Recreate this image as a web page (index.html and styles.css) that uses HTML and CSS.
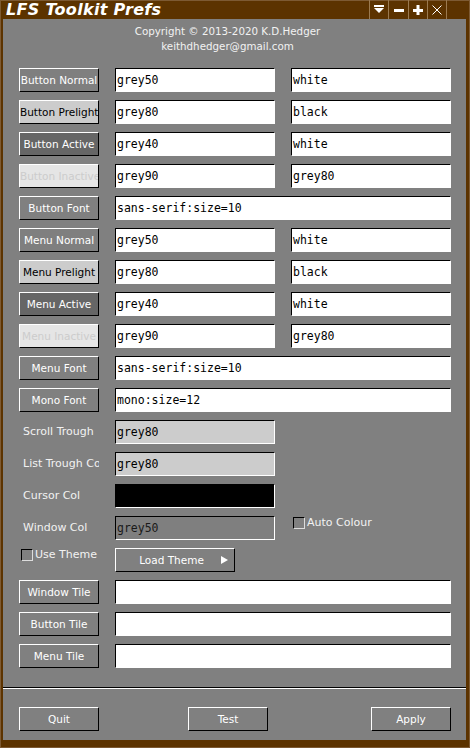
FILE: index.html
```html
<!DOCTYPE html>
<html>
<head>
<meta charset="utf-8">
<title>LFS Toolkit Prefs</title>
<link rel="stylesheet" href="styles.css">
</head>
<body>
<div class="win">
  <div class="titlebar">
    <span class="title">LFS Toolkit Prefs</span>
    <div class="tbtns">
      <div class="tbtn"><svg width="12" height="10" viewBox="0 0 12 10"><rect x="1" y="0" width="10" height="2" fill="#fff"/><path d="M1 3 H11 L6 8 Z" fill="#fff"/></svg></div>
      <div class="tbtn"><svg width="12" height="10" viewBox="0 0 12 10"><rect x="1" y="4" width="10" height="3" fill="#fff"/></svg></div>
      <div class="tbtn"><svg width="12" height="12" viewBox="0 0 12 12"><rect x="1" y="5" width="10" height="3" fill="#fff"/><rect x="4.5" y="1" width="3" height="10" fill="#fff"/></svg></div>
      <div class="tbtn"><svg width="12" height="12" viewBox="0 0 12 12"><path d="M1.5 1.5 L10.5 10.5 M10.5 1.5 L1.5 10.5" stroke="#fff" stroke-width="1"/></svg></div>
    </div>
  </div>
  <div class="content">
    <div class="about">
      <p>Copyright © 2013-2020 K.D.Hedger</p>
      <p>keithdhedger@gmail.com</p>
    </div>
    <div class="grid">
      <div class="btn c-g50">Button Normal</div>
      <div class="field">grey50</div>
      <div class="field">white</div>

      <div class="btn c-g80">Button Prelight</div>
      <div class="field">grey80</div>
      <div class="field">black</div>

      <div class="btn c-g40">Button Active</div>
      <div class="field">grey40</div>
      <div class="field">white</div>

      <div class="btn c-g90">Button Inactive</div>
      <div class="field">grey90</div>
      <div class="field">grey80</div>

      <div class="btn">Button Font</div>
      <div class="field wide">sans-serif:size=10</div>

      <div class="btn c-g50">Menu Normal</div>
      <div class="field">grey50</div>
      <div class="field">white</div>

      <div class="btn c-g80">Menu Prelight</div>
      <div class="field">grey80</div>
      <div class="field">black</div>

      <div class="btn c-g40">Menu Active</div>
      <div class="field">grey40</div>
      <div class="field">white</div>

      <div class="btn c-g90">Menu Inactive</div>
      <div class="field">grey90</div>
      <div class="field">grey80</div>

      <div class="btn">Menu Font</div>
      <div class="field wide">sans-serif:size=10</div>

      <div class="btn">Mono Font</div>
      <div class="field wide">mono:size=12</div>

      <div class="label">Scroll Trough</div>
      <div class="field f-g80">grey80</div>
      <div class="empty"></div>

      <div class="label">List Trough Colour</div>
      <div class="field f-g80">grey80</div>
      <div class="empty"></div>

      <div class="label">Cursor Col</div>
      <div class="field f-black"></div>
      <div class="empty"></div>

      <div class="label">Window Col</div>
      <div class="field f-g50">grey50</div>
      <div class="check"><span class="box"></span>Auto Colour</div>

      <div class="check use"><span class="box"></span>Use Theme</div>
      <div class="btn loadbtn"><span class="lt">Load Theme</span><svg class="arrow" width="8" height="10" viewBox="0 0 8 10"><path d="M0 1 L7 5 L0 9 Z" fill="#fff"/></svg></div>
      <div class="empty"></div>

      <div class="btn">Window Tile</div>
      <div class="field wide"></div>

      <div class="btn">Button Tile</div>
      <div class="field wide"></div>

      <div class="btn">Menu Tile</div>
      <div class="field wide"></div>
    </div>
    <div class="sep"></div>
    <div class="footer">
      <div class="btn">Quit</div>
      <div class="btn test">Test</div>
      <div class="btn apply">Apply</div>
    </div>
  </div>
</div>
</body>
</html>
```
FILE: styles.css
```css
html, body {
  margin: 0;
  padding: 0;
  background: #5c3300;
}
.win {
  width: 470px;
  height: 748px;
  box-sizing: border-box;
  background: #5c3300;
  border: 1px solid #7d5a33;
  padding: 18px 3px 7px 2px;
  display: flex;
  flex-direction: column;
  position: relative;
  font-family: "DejaVu Sans", sans-serif;
}
.titlebar {
  position: absolute;
  top: -1px;
  left: 0;
  right: 0;
  height: 19px;
  display: flex;
  align-items: center;
}
.title {
  margin-left: 5px;
  color: #fff;
  font-family: "DejaVu Sans", sans-serif;
  font-weight: bold;
  font-style: italic;
  font-size: 16px;
  letter-spacing: 0.3px;
  line-height: 19px;
}
.tbtns {
  margin-left: auto;
  margin-right: 22px;
  display: flex;
  height: 19px;
  border-left: 1px solid #9b7a50;
}
.tbtn {
  width: 18px;
  height: 19px;
  border-right: 1px solid #9b7a50;
  display: flex;
  align-items: center;
  justify-content: center;
}
.tbtn:nth-child(2) { width: 19px; }
.content {
  flex: 1;
  background: #808080;
  display: flex;
  flex-direction: column;
}
.about {
  padding-top: 5px;
  padding-right: 14px;
  height: 49px;
  box-sizing: border-box;
  text-align: center;
  color: #f2f2f2;
  font-size: 10.3px;
  line-height: 15px;
}
.about p { margin: 0; }
.grid {
  display: grid;
  grid-template-columns: 80px 160px 160px;
  grid-auto-rows: 24px;
  column-gap: 16px;
  row-gap: 8px;
  padding-left: 16px;
}
.btn {
  box-sizing: border-box;
  height: 24px;
  border-top: 1px solid #fff;
  border-left: 1px solid #fff;
  border-right: 1px solid #000;
  border-bottom: 1px solid #000;
  background: #808080;
  color: #fff;
  font-size: 10.5px;
  line-height: 22px;
  text-align: center;
  white-space: nowrap;
  overflow: hidden;
}
.c-g50 { background: #7f7f7f; color: #fff; }
.c-g80 { background: #cccccc; color: #000; }
.c-g40 { background: #666666; color: #fff; }
.c-g90 { background: #e5e5e5; color: #cccccc; }
.field {
  box-sizing: border-box;
  height: 24px;
  background: #fff;
  border-top: 1px solid #000;
  border-left: 1px solid #000;
  border-right: 1px solid #fff;
  border-bottom: 1px solid #fff;
  font-family: "DejaVu Sans Mono", monospace;
  font-size: 11.5px;
  line-height: 22px;
  padding-left: 1px;
  color: #000;
  white-space: nowrap;
  overflow: hidden;
}
.wide { grid-column: 2 / 4; }
.f-g80 { background: #cccccc; }
.f-g50 { background: #7f7f7f; color: #1a1a1a; }
.f-black { background: #000; }
.label {
  color: #f2f2f2;
  font-size: 11px;
  line-height: 24px;
  padding-left: 4px;
  white-space: nowrap;
  overflow: hidden;
}
.check {
  display: flex;
  align-items: center;
  height: 13px;
  color: #f2f2f2;
  font-size: 11px;
  white-space: nowrap;
  margin-left: 2px;
}
.check.use { overflow: hidden; }
.box {
  box-sizing: border-box;
  width: 12px;
  height: 12px;
  border-top: 1px solid #000;
  border-left: 1px solid #000;
  border-right: 1px solid #ddd;
  border-bottom: 1px solid #ddd;
  margin-right: 2px;
  flex: none;
}
.loadbtn {
  width: 120px;
  display: flex;
  align-items: center;
}
.loadbtn .lt { flex: 1; text-align: center; padding-left: 6px; }
.loadbtn .arrow { margin-right: 5px; }
.sep {
  margin-top: 19px;
  height: 1px;
  background: #000;
  border-bottom: 1px solid #fff;
}
.footer {
  margin-top: 18px;
  display: flex;
  padding-left: 16px;
  padding-right: 15px;
}
.footer .btn { width: 80px; }
.footer .test { margin-left: 89px; }
.footer .apply { margin-left: auto; }
```
